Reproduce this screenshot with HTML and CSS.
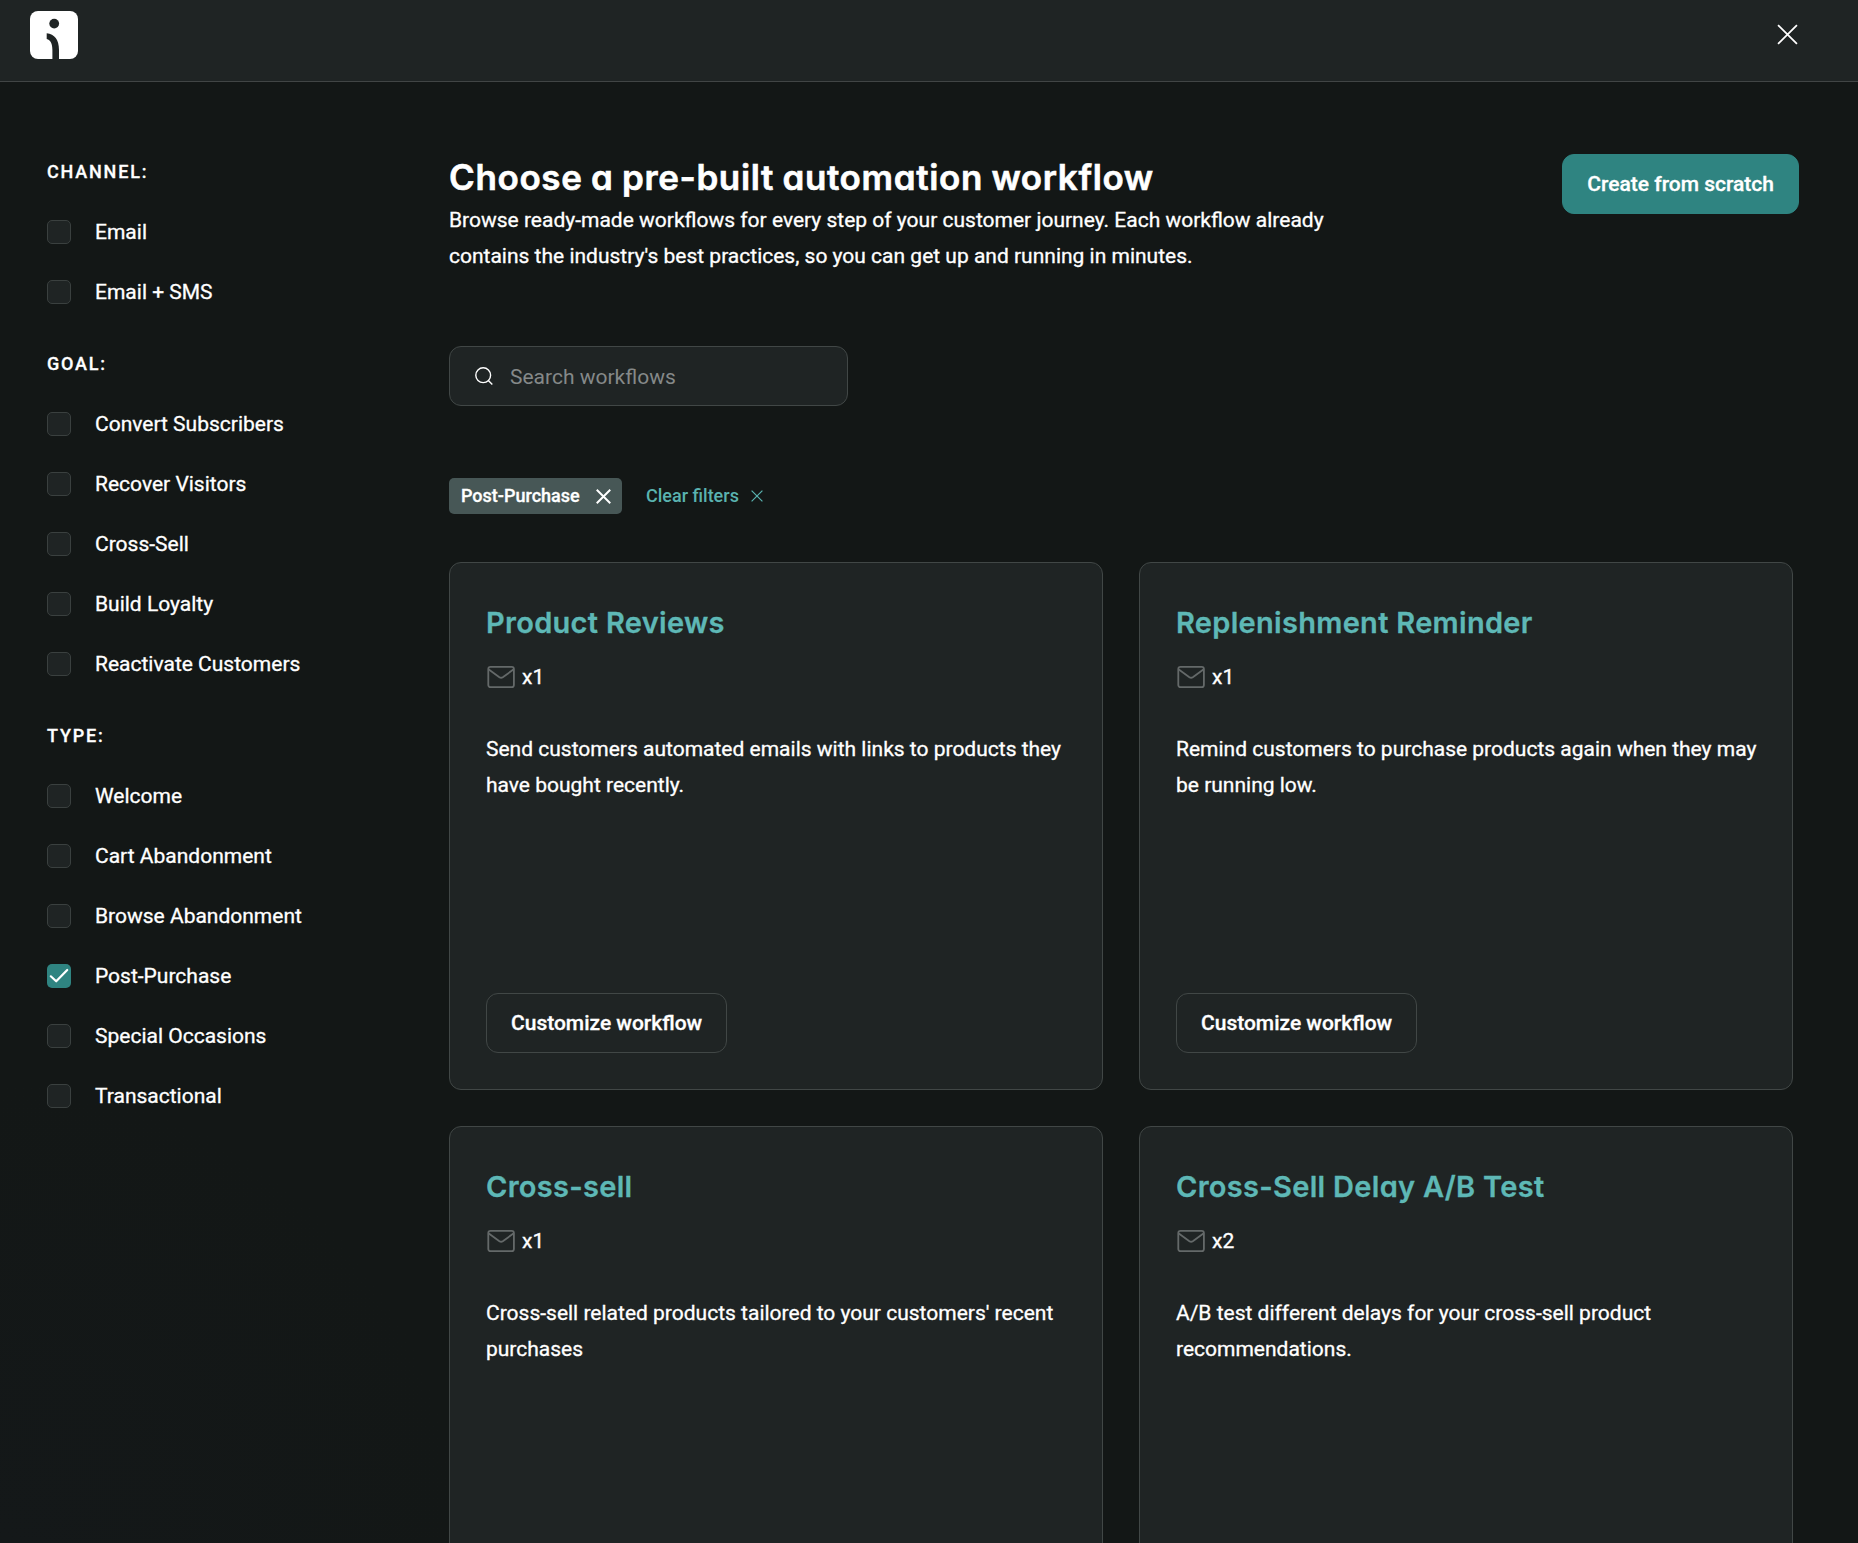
FILE: index.html
```html
<!DOCTYPE html>
<html lang="en">
<head>
    <meta charset="UTF-8">
    <meta name="viewport" content="width=device-width, initial-scale=1.0">
    <title>Automation workflows</title>
    <link rel="stylesheet" href="styles.css">
</head>
<body>
    <!-- Shared icons -->
    <svg class="sprite" width="0" height="0">
        <symbol id="mail" viewBox="0 0 30 24">
            <rect x="2.3" y="1.8" width="25.6" height="20.4" rx="2.2"/>
            <path d="M2.8 4.6 L13.4 12.2 Q15.1 13.3 16.8 12.2 L27.4 4.6"/>
        </symbol>
        <symbol id="cross" viewBox="0 0 20 20">
            <path d="M1 1 L19 19 M19 1 L1 19"/>
        </symbol>
    </svg>

    <header class="header">
        <svg class="logo" viewBox="0 0 48 48">
            <rect width="48" height="48" rx="8" fill="#fff"/>
            <circle cx="24.2" cy="12.6" r="4.9" fill="#1f2424"/>
            <path d="M16.7 22.2 C24.5 23 29 28.5 29 39 V48 H22.4 V39 C22.4 32.5 20.6 29.2 16.7 28 Z" fill="#1f2424"/>
        </svg>
        <svg class="close"><use href="#cross"/></svg>
    </header>

    <div class="page">
        <!-- Filters -->
        <aside class="sidebar">
            <section class="group">
                <h3>CHANNEL:</h3>
                <label><input type="checkbox">Email</label>
                <label><input type="checkbox">Email + SMS</label>
            </section>
            <section class="group">
                <h3>GOAL:</h3>
                <label><input type="checkbox">Convert Subscribers</label>
                <label><input type="checkbox">Recover Visitors</label>
                <label><input type="checkbox">Cross-Sell</label>
                <label><input type="checkbox">Build Loyalty</label>
                <label><input type="checkbox">Reactivate Customers</label>
            </section>
            <section class="group">
                <h3>TYPE:</h3>
                <label><input type="checkbox">Welcome</label>
                <label><input type="checkbox">Cart Abandonment</label>
                <label><input type="checkbox">Browse Abandonment</label>
                <label>
                    <svg class="check" viewBox="0 0 24 24"><path d="M3.8 12.3 L9.2 17.3 L20.2 6"/></svg>Post-Purchase
                </label>
                <label><input type="checkbox">Special Occasions</label>
                <label><input type="checkbox">Transactional</label>
            </section>
        </aside>

        <main class="main">
            <div class="intro">
                <div>
                    <h1>Choose a pre-built automation workflow</h1>
                    <p>Browse ready-made workflows for every step of your customer journey. Each workflow already contains the industry's best practices, so you can get up and running in minutes.</p>
                </div>
                <button type="button" class="btn btn-primary">Create from scratch</button>
            </div>

            <div class="search">
                <svg viewBox="0 0 18 18"><circle cx="8.2" cy="8.2" r="7.4"/><path d="M13.3 13.5 L17.3 17.4"/></svg>
                <input type="text" placeholder="Search workflows">
            </div>

            <div class="filters">
                <span class="chip">Post-Purchase <svg><use href="#cross"/></svg></span>
                <a class="clear">Clear filters <svg><use href="#cross"/></svg></a>
            </div>

            <!-- Workflow cards -->
            <div class="cards">
                <article class="card">
                    <h2>Product Reviews</h2>
                    <div class="count"><svg><use href="#mail"/></svg>x1</div>
                    <p>Send customers automated emails with links to products they have bought recently.</p>
                    <button type="button" class="btn">Customize workflow</button>
                </article>
                <article class="card">
                    <h2>Replenishment Reminder</h2>
                    <div class="count"><svg><use href="#mail"/></svg>x1</div>
                    <p>Remind customers to purchase products again when they may be running low.</p>
                    <button type="button" class="btn">Customize workflow</button>
                </article>
                <article class="card">
                    <h2>Cross-sell</h2>
                    <div class="count"><svg><use href="#mail"/></svg>x1</div>
                    <p>Cross-sell related products tailored to your customers' recent purchases</p>
                </article>
                <article class="card">
                    <h2>Cross-Sell Delay A/B Test</h2>
                    <div class="count"><svg><use href="#mail"/></svg>x2</div>
                    <p>A/B test different delays for your cross-sell product recommendations.</p>
                </article>
            </div>
        </main>
    </div>
</body>
</html>
```
FILE: styles.css
```css
* {
    box-sizing: border-box;
    margin: 0;
}

body {
    height: 100vh;
    overflow: hidden;
    background: radial-gradient(circle at 0 100%, #141819 0, #131716 460px);
    color: #fff;
    font-family: Roboto, sans-serif;
    font-size: 21px;
    line-height: 36px;
    -webkit-text-stroke: 0.3px;
}

svg {
    flex: none;
    fill: none;
    stroke: currentColor;
}

.sprite {
    position: absolute;
}

/* Header */
.header {
    display: flex;
    justify-content: space-between;
    align-items: flex-start;
    height: 82px;
    padding: 11px 60px 0 30px;
    background: #1f2424;
    border-bottom: 1px solid #414545;
}

.logo {
    width: 48px;
    height: 48px;
    stroke: none;
}

.close {
    width: 21px;
    height: 21px;
    margin-top: 13px;
    stroke-width: 1.7;
}

.page {
    display: flex;
    height: calc(100vh - 82px);
    padding: 72px 59px 0 47px;
    overflow: hidden;
}

/* Filters */
.sidebar {
    width: 402px;
    flex: none;
}

.group {
    margin-bottom: 36px;
}

.group h3 {
    font-size: 18px;
    font-weight: 500;
    letter-spacing: 1.8px;
}

.group label {
    display: flex;
    align-items: center;
    gap: 24px;
    margin-top: 24px;
}

.group input {
    appearance: none;
    width: 24px;
    height: 24px;
    background: #1f2424;
    border: 1px solid #3a403f;
    border-radius: 5px;
}

.check {
    width: 24px;
    height: 24px;
    background: #2f8481;
    border-radius: 5px;
    stroke-width: 2.2;
    stroke-linecap: round;
    stroke-linejoin: round;
}

/* Main column */
.main {
    flex: 1;
}

.intro {
    display: flex;
    justify-content: space-between;
    align-items: flex-start;
}

.intro p {
    width: 900px;
}

h1, h2 {
    font-family: Inter, sans-serif;
    font-weight: 600;
    font-feature-settings: "cv11";
}

h1 {
    padding-bottom: 2px;
    font-size: 35px;
    line-height: 46px;
    letter-spacing: 0.63px;
    word-spacing: -1px;
    -webkit-text-stroke: 0.6px;
}

.btn {
    height: 60px;
    padding: 0 24px;
    background: none;
    border: 1px solid #414746;
    border-radius: 12px;
    color: #fff;
    font: 500 21px Roboto, sans-serif;
    -webkit-text-stroke: 0.3px;
}

.btn-primary {
    background: #2f8481;
    border-color: #2f8481;
}

.search {
    display: flex;
    align-items: center;
    gap: 17px;
    width: 399px;
    height: 60px;
    margin-top: 72px;
    padding: 0 24px 0 25px;
    background: #1f2424;
    border: 1px solid #414746;
    border-radius: 12px;
}

.search svg {
    width: 18px;
    height: 18px;
    stroke-width: 1.4;
}

.search input {
    width: 100%;
    padding: 2px 0 0;
    background: none;
    border: 0;
    font: 21px Roboto, sans-serif;
}

.search input::placeholder {
    color: #858989;
    -webkit-text-stroke: 0;
}

.filters {
    display: flex;
    gap: 24px;
    margin-top: 72px;
    font-size: 18px;
}

.chip {
    display: flex;
    align-items: center;
    justify-content: space-between;
    width: 173px;
    height: 36px;
    padding: 0 11px 0 12px;
    background: #475756;
    border-radius: 5px;
    font-weight: 500;
}

.chip svg {
    width: 15px;
    height: 15px;
    stroke-width: 2.6;
}

.clear {
    display: flex;
    align-items: center;
    gap: 12px;
    color: #5ab3b0;
    font-weight: 500;
    -webkit-text-stroke: 0;
}

.clear svg {
    width: 12px;
    height: 12px;
    stroke-width: 2;
}

/* Cards */
.cards {
    display: grid;
    grid-template-columns: 654px 654px;
    grid-auto-rows: 528px;
    gap: 36px;
    margin-top: 48px;
}

.card {
    display: flex;
    flex-direction: column;
    align-items: flex-start;
    padding: 36px 32px 36px 36px;
    background: #1f2424;
    border: 1px solid #414746;
    border-radius: 12px;
}

.card h2 {
    color: #5eb8b6;
    font-size: 29px;
    line-height: 48px;
    letter-spacing: 0.3px;
}

.count {
    display: flex;
    align-items: center;
    gap: 6px;
    margin: 12px 0 36px;
}

.count svg {
    width: 30px;
    height: 24px;
    color: #646969;
    stroke-width: 1.8;
}

.card .btn {
    margin-top: auto;
}
```
